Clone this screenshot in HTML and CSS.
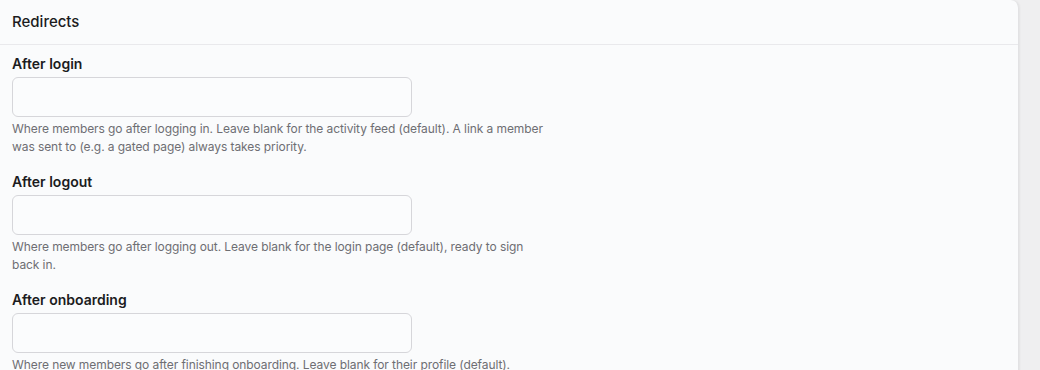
FILE: index.html
```html
<!DOCTYPE html>
<html lang="en">
<head>
    <meta charset="UTF-8">
    <meta name="viewport" content="width=device-width, initial-scale=1.0">
    <title>Redirects</title>
    <link rel="stylesheet" href="styles.css">
</head>
<body>
    <div class="page">
        <section class="card">
            <div class="card-header">
                <h2>Redirects</h2>
            </div>
            <div class="card-body">
                <div class="field">
                    <label for="after-login">After login</label>
                    <input type="text" id="after-login">
                    <p class="help">Where members go after logging in. Leave blank for the activity feed (default). A link a member was sent to (e.g. a gated page) always takes priority.</p>
                </div>
                <div class="field">
                    <label for="after-logout">After logout</label>
                    <input type="text" id="after-logout">
                    <p class="help">Where members go after logging out. Leave blank for the login page (default), ready to sign back in.</p>
                </div>
                <div class="field">
                    <label for="after-onboarding">After onboarding</label>
                    <input type="text" id="after-onboarding">
                    <p class="help">Where new members go after finishing onboarding. Leave blank for their profile (default).</p>
                </div>
            </div>
        </section>
    </div>
</body>
</html>
```

FILE: styles.css
```css
body {
    font-family: 'Inter', 'Noto Sans', sans-serif;
    margin: 0;
    background-color: #efeff0;
    color: #1c1c1e;
    overflow: hidden;
}

.page {
    padding-right: 21px;
    height: 370px;
}

.card {
    background-color: #fafbfc;
    border-right: 1px solid #e2e2e4;
    border-top-right-radius: 8px;
    box-shadow: 1px 0 2px rgba(0, 0, 0, 0.05);
    min-height: 100%;
}

.card-header {
    height: 45px;
    display: flex;
    align-items: center;
    padding: 0 12px;
    border-bottom: 1px solid #e9e9ec;
    box-sizing: border-box;
}

.card-header h2 {
    margin: 0;
    font-size: 15px;
    font-weight: 500;
    padding-bottom: 2px;
}

.card-body {
    padding: 9px 12px 0;
    display: flex;
    flex-direction: column;
    gap: 16px;
}

.field {
    display: flex;
    flex-direction: column;
}

label {
    font-size: 14px;
    font-weight: 600;
    line-height: 20px;
    margin-bottom: 3px;
}

input {
    width: 400px;
    height: 40px;
    box-sizing: border-box;
    border: 1px solid #d6d6da;
    border-radius: 6px;
    background-color: #fbfcfd;
    padding: 0 10px;
    font-family: inherit;
    font-size: 14px;
}

.help {
    margin: 3px 0 0;
    font-size: 12px;
    line-height: 18px;
    letter-spacing: -0.08px;
    color: #6e6e73;
    max-width: 540px;
}
```
